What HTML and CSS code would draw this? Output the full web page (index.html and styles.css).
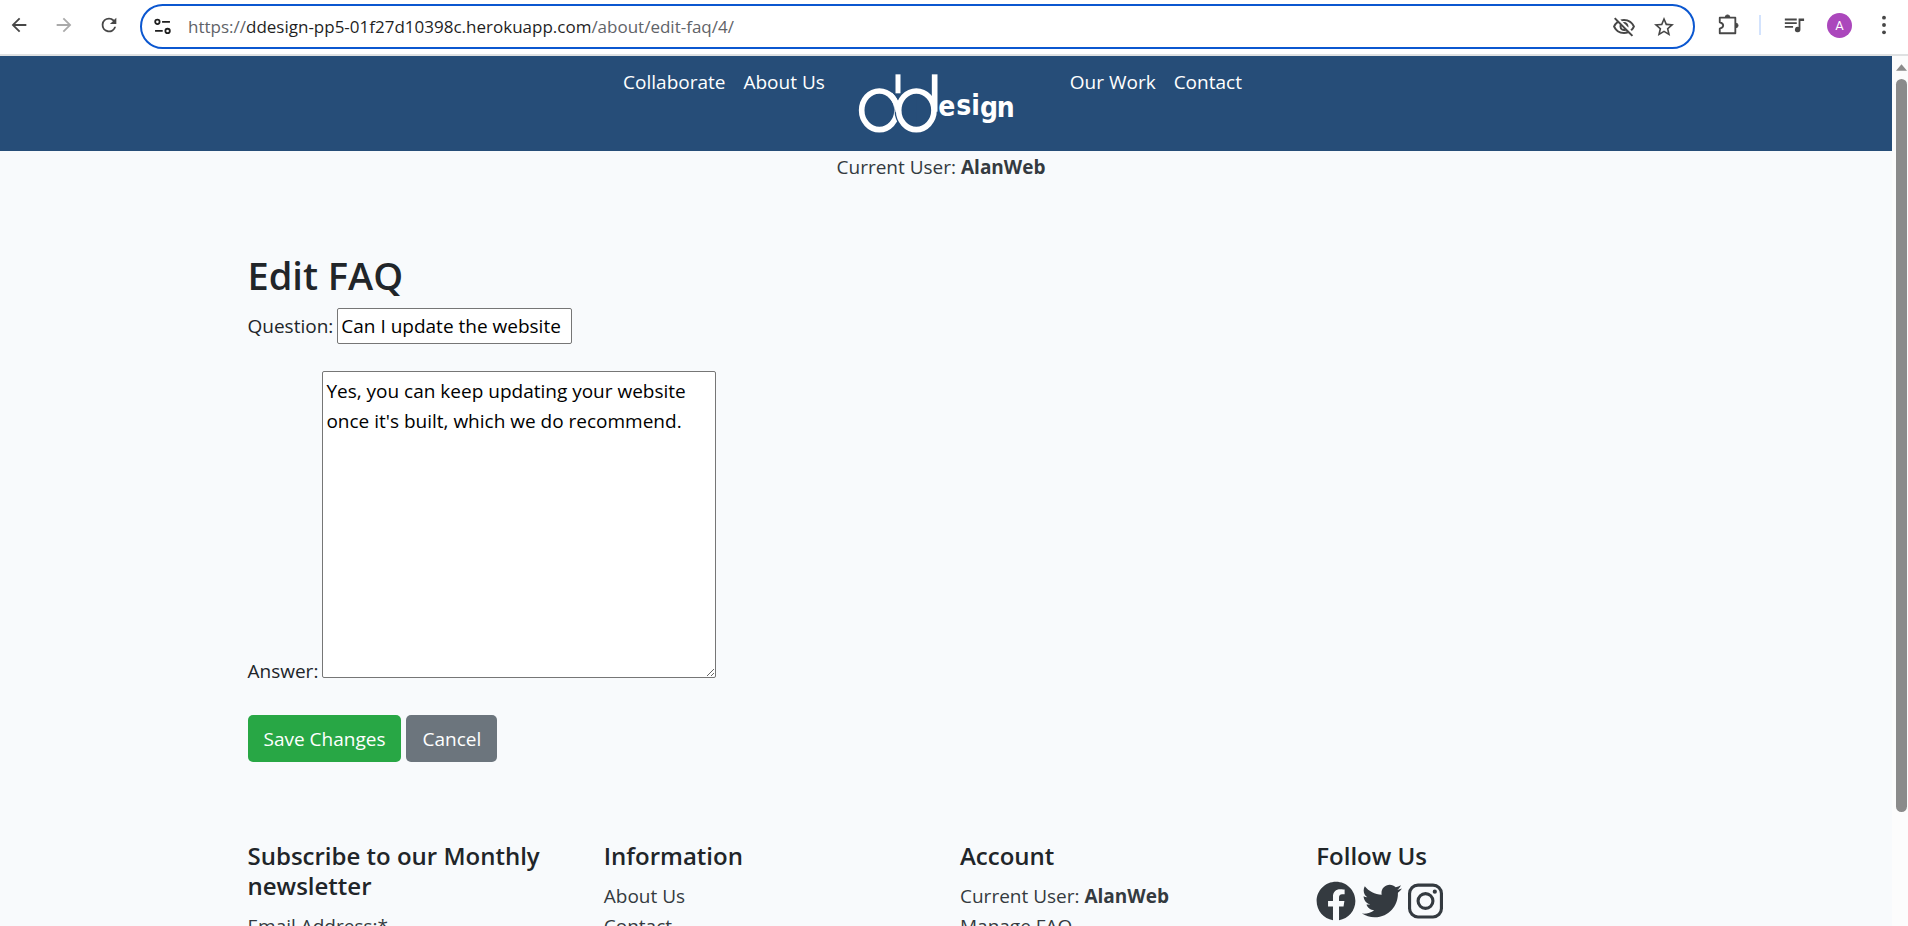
FILE: index.html
```html
<!DOCTYPE html>
<html lang="en">
<head>
<meta charset="utf-8">
<title>Edit FAQ</title>
<link rel="stylesheet" href="styles.css">
</head>
<body>
<div class="toolbar">
  <button class="tool back" aria-label="Back"><svg viewBox="0 0 24 24"><path d="M20 11H7.83l5.59-5.59L12 4l-8 8 8 8 1.41-1.41L7.83 13H20z"/></svg></button>
  <button class="tool forward" aria-label="Forward"><svg viewBox="0 0 24 24"><path d="M4 13h12.17l-5.59 5.59L12 20l8-8-8-8-1.41 1.41L16.17 11H4z"/></svg></button>
  <button class="tool reload" aria-label="Reload"><svg viewBox="0 0 24 24"><path d="M17.65 6.35A7.96 7.96 0 0 0 12 4a8 8 0 1 0 7.73 10h-2.08A6 6 0 1 1 12 6c1.66 0 3.14.69 4.22 1.78L13 11h7V4z"/></svg></button>
  <div class="address">
    <button class="site" aria-label="Site information"><svg viewBox="0 0 16 16" fill="none" stroke="currentColor" stroke-width="1.7"><circle cx="3.2" cy="3.6" r="2.1"/><path d="M7.6 3.6H15M1 12.2h7.2"/><circle cx="12.8" cy="12.2" r="2.1"/></svg></button>
    <div class="url"><span>https://</span>ddesign-pp5-01f27d10398c.herokuapp.com<span>/about/edit-faq/4/</span></div>
    <button class="tool eye" aria-label="Tracking protection"><svg viewBox="0 0 24 24"><path d="M12 6a9.77 9.77 0 0 1 8.82 5.5 9.65 9.65 0 0 1-2.41 3.12l1.41 1.41c1.39-1.23 2.49-2.77 3.18-4.53C21.27 7.11 17 4 12 4c-1.27 0-2.49.2-3.64.57l1.65 1.65C10.66 6.09 11.32 6 12 6zm-1.07 1.14L13 9.21c.57.25 1.03.71 1.28 1.28l2.07 2.07c.08-.34.14-.7.14-1.07C16.5 9.01 14.48 7 12 7c-.37 0-.72.05-1.07.14zM2.01 3.87l2.68 2.68A11.74 11.74 0 0 0 1 11.5C2.73 15.89 7 19 12 19c1.52 0 2.98-.29 4.32-.82l3.42 3.42 1.41-1.41L3.42 2.45zm7.5 7.5 2.61 2.61c-.04.01-.08.02-.12.02a2.5 2.5 0 0 1-2.5-2.5c0-.05.01-.08.01-.13zm-3.4-3.4 1.75 1.75a4.6 4.6 0 0 0-.36 1.78 4.507 4.507 0 0 0 6.27 4.14l.98.98c-.88.24-1.8.38-2.75.38a9.77 9.77 0 0 1-8.82-5.5c.7-1.43 1.72-2.61 2.93-3.53z"/></svg></button>
    <button class="tool star" aria-label="Bookmark"><svg viewBox="0 0 24 24"><path d="m22 9.24-7.19-.62L12 2 9.19 8.63 2 9.24l5.46 4.73L5.82 21 12 17.27 18.18 21l-1.63-7.03zM12 15.4l-3.76 2.27 1-4.28-3.32-2.88 4.38-.38L12 6.1l1.71 4.04 4.38.38-3.32 2.88 1 4.28z"/></svg></button>
  </div>
  <button class="tool extensions" aria-label="Extensions"><svg viewBox="0 0 24 24" fill="none" stroke="currentColor" stroke-width="2"><path d="M3 4h17v17H3v-5c5-1.500 5-5.500 0-7z" stroke-linejoin="round"/><path d="M9 3.500a2.500 2.500 0 0 1 5 0zM20.500 10a2.500 2.500 0 0 1 0 5z" fill="currentColor" stroke-width="1"/></svg></button>
  <span class="divider"></span>
  <button class="tool media" aria-label="Media controls"><svg viewBox="0 0 24 24"><path d="M2 5h13v2H2zm0 4h13v2H2zm0 4h9v2H2zM17 5h6v2.500h-4V17a3 3 0 1 1-2-2.820z"/></svg></button>
  <button class="avatar" aria-label="Profile">A</button>
  <button class="tool more" aria-label="Menu"><svg viewBox="0 0 24 24"><circle cx="12" cy="4" r="2.100"/><circle cx="12" cy="12" r="2.100"/><circle cx="12" cy="20" r="2.100"/></svg></button>
</div>
<div class="viewport">
  <div class="page">
    <nav class="nav">
      <a href="#">Collaborate</a>
      <a href="#">About Us</a>
      <a class="logo" href="#" aria-label="ddesign home"><svg viewBox="0 0 600 285"><g fill="none" stroke="#fff" stroke-width="17"><ellipse cx="118" cy="163" rx="53" ry="58"/><path d="M174 55v57" stroke-width="15"/></g><ellipse cx="229" cy="163" rx="53" ry="58" fill="none" stroke="#264d78" stroke-width="25"/><path d="M180 155a53 58 0 0 1 49-50v116a53 58 0 0 1-49-50z" fill="#264d78"/><g fill="none" stroke="#fff" stroke-width="17"><ellipse cx="229" cy="163" rx="53" ry="58"/><path d="M284 55v112"/><path d="M150 116q22 20 25 52"/></g><text class="script" x="295 349 394 420 470" y="180 177 178 183 182">esign</text></svg></a>
      <a href="#">Our Work</a>
      <a href="#">Contact</a>
    </nav>
    <p class="current">Current User: <strong>AlanWeb</strong></p>
    <main class="container">
      <h1>Edit FAQ</h1>
      <form>
        <div class="field question"><label for="question">Question:</label><input id="question" type="text" value="Can I update the website"></div>
        <div class="field answer"><label for="answer">Answer:</label><textarea id="answer">Yes, you can keep updating your website once it's built, which we do recommend.</textarea></div>
        <div class="actions"><button class="btn save" type="submit">Save Changes</button><button class="btn cancel" type="button">Cancel</button></div>
      </form>
    </main>
    <footer class="container footer">
      <section><h2>Subscribe to our Monthly newsletter</h2><label for="email">Email Address:*</label><input id="email" type="email"></section>
      <section><h2>Information</h2><a href="#">About Us</a><a href="#">Contact</a></section>
      <section><h2>Account</h2><p>Current User: <strong>AlanWeb</strong></p><a href="#">Manage FAQ</a></section>
      <section><h2>Follow Us</h2>
        <div class="social">
          <a href="#" aria-label="Facebook"><svg viewBox="0 0 512 512"><path d="M504 256C504 119 393 8 256 8S8 119 8 256c0 123.780 90.690 226.380 209.250 245V327.690h-63V256h63v-54.640c0-62.150 37-96.480 93.670-96.480 27.140 0 55.520 4.840 55.520 4.840v61h-31.280c-30.800 0-40.410 19.120-40.410 38.730V256h68.780l-11 71.690h-57.780V501C413.310 482.380 504 379.780 504 256z"/></svg></a>
          <a href="#" aria-label="Twitter"><svg viewBox="0 0 512 512"><path d="M459.370 151.716c.325 4.548.325 9.097.325 13.645 0 138.720-105.583 298.558-298.558 298.558-59.452 0-114.680-17.219-161.137-47.106 8.447.974 16.568 1.299 25.340 1.299 49.055 0 94.213-16.568 130.274-44.832-46.132-.975-84.792-31.188-98.112-72.772 6.498.974 12.995 1.624 19.818 1.624 9.421 0 18.843-1.300 27.614-3.573-48.081-9.747-84.143-51.980-84.143-102.985v-1.299c13.969 7.797 30.214 12.670 47.431 13.319-28.264-18.843-46.781-51.005-46.781-87.391 0-19.492 5.197-37.360 14.294-52.954 51.655 63.675 129.300 105.258 216.365 109.807-1.624-7.797-2.599-15.918-2.599-24.040 0-57.828 46.782-104.934 104.934-104.934 30.213 0 57.502 12.670 76.670 33.137 23.715-4.548 46.456-13.320 66.599-25.340-7.798 24.366-24.366 44.833-46.132 57.827 21.117-2.273 41.584-8.122 60.426-16.243-14.292 20.791-32.161 39.308-52.628 54.253z"/></svg></a>
          <a href="#" aria-label="Instagram"><svg class="insta" viewBox="0 0 448 512" fill="none" stroke="currentColor" stroke-width="40"><rect x="20" y="52" width="408" height="408" rx="108"/><circle cx="224" cy="256" r="95"/><circle cx="343" cy="137" r="27" fill="currentColor" stroke="none"/></svg></a>
        </div>
      </section>
    </footer>
  </div>
  <div class="scrollbar"><svg viewBox="0 0 12 7"><path d="M6 0l6 7H0z"/></svg><div class="thumb"></div></div>
</div>
</body>
</html>
```
FILE: styles.css
```css
* { box-sizing: border-box; }
body {
  margin: 0;
  height: 100vh;
  display: flex;
  flex-direction: column;
  overflow: hidden;
  background: #f8fafc;
  color: #212529;
  font: 19px/30px "Open Sans", "Noto Sans", sans-serif;
}
a { color: inherit; text-decoration: none; }
p { margin: 0; }
button { font: inherit; border: 0; padding: 0; background: none; color: inherit; }
svg { display: block; fill: currentColor; }
svg[fill="none"] { fill: none; }

.toolbar {
  flex: none;
  height: 56px;
  display: flex;
  align-items: center;
  padding: 0 13px 4px 8px;
  background: #fff;
  border-bottom: 2px solid #dfe1e2;
  color: #474747;
}
.tool svg { width: 22px; height: 22px; }
.tool.eye svg, .tool.star svg { width: 24px; height: 24px; }
.back { margin-right: 23px; }
.forward { margin-right: 23px; color: #aaa; }
.reload { margin-right: 20px; }
.address {
  flex: 1;
  height: 45px;
  margin-top: 3px;
  display: flex;
  align-items: center;
  padding: 0 17px 0 12px;
  border: 2px solid #0b57d0;
  border-radius: 23px;
}
.site { color: #1f1f1f; margin-right: 17px; }
.site svg { width: 17px; height: 17px; }
.url { flex: 1; font-size: 17px; color: #1f1f1f; }
.url span { color: #5f6368; }
.star { margin-left: 16px; }
.extensions { margin-left: 22px; }
.divider { width: 2px; height: 20px; margin: 0 22px 0 20px; background: #d3e3fd; }
.avatar {
  width: 25px;
  height: 25px;
  margin: 0 21px 0 22px;
  border-radius: 50%;
  background: #ab47bc;
  color: #fff;
  font: 13px/25px Roboto, sans-serif;
}

.viewport { flex: 1; min-height: 0; display: flex; }
.page { flex: 1; min-width: 0; overflow: hidden; }
.nav {
  display: flex;
  justify-content: center;
  align-items: flex-start;
  gap: 18px;
  padding-right: 27px;
  background: #264d78;
  color: #fff;
}
.nav a { padding-top: 11px; }
.nav .logo { padding: 0; margin: 0 12px 0 -3px; }
.logo svg { width: 200px; height: 95px; }
.script { font: bold 84px "Liberation Sans Narrow", "DejaVu Sans Condensed", sans-serif; fill: #fff; }
.current { text-align: center; padding: 1px 10px 0 0; }
.current, .footer p { color: #343a40; }
.container { max-width: 1425px; margin: 0 auto; padding: 0 14px; }
main.container { padding-top: 69px; }
h1 { margin: 0 0 9px; font-size: 38px; line-height: 48px; font-weight: 600; }
.field { display: flex; gap: 4px; }
.field input, .field textarea {
  font: inherit;
  color: #000;
  background: #fff;
  border: 1px solid #767676;
  border-radius: 2px;
}
.question { align-items: center; }
.question input { width: 235px; height: 36px; padding: 1px 3px; }
.answer { margin-top: 27px; align-items: flex-end; }
.answer textarea { width: 394px; height: 307px; padding: 4px 3px; }
.answer label { margin-bottom: -8px; }
.actions { display: flex; gap: 5px; margin-top: 37px; }
.btn { height: 47px; padding: 0 16px; border-radius: 5px; color: #fff; }
.save { background: #28a745; }
.cancel { background: #6c757d; }
.footer { display: grid; grid-template-columns: repeat(4, 1fr); margin-top: 79px; padding: 0; }
.footer section { padding: 0 26px 0 14px; display: flex; flex-direction: column; align-items: flex-start; }
.footer h2 { margin: 0 0 10px; font-size: 24px; line-height: 30px; font-weight: 600; }
.footer a, .footer label { color: #343a40; }
.social { display: flex; gap: 6px; }
.social svg { width: 40px; height: 40px; }
.social .insta { width: 35px; }

.scrollbar {
  width: 16px;
  padding: 8px 1px 0 4px;
  background: #fcfcfc;
  color: #8b8b8b;
}
.scrollbar svg { width: 11px; height: 7px; }
.thumb { height: 85%; margin-top: 8px; border-radius: 6px; background: #8b8b8b; }
```
